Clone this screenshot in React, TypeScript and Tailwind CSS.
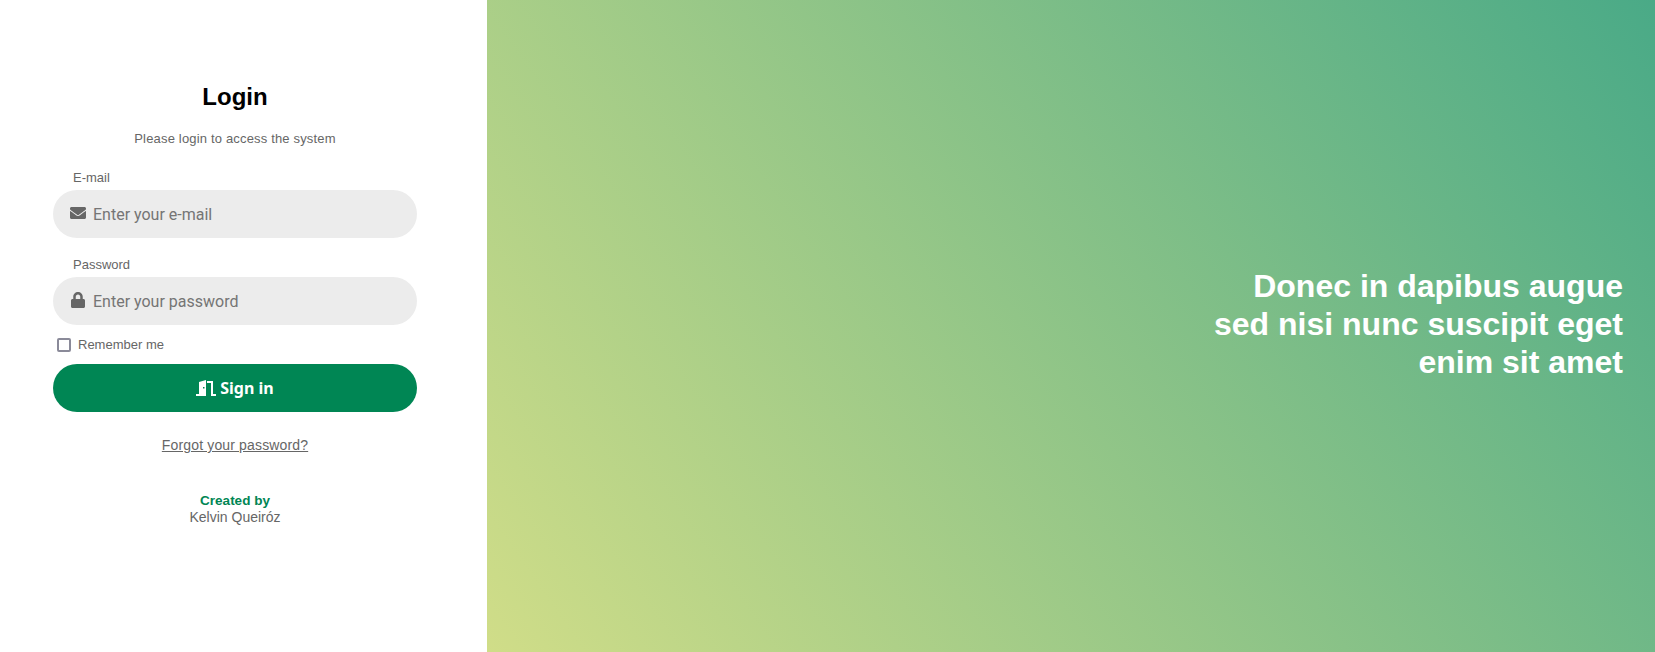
import type { ReactNode } from 'react';
import { FaEnvelope, FaLock } from 'react-icons/fa';

function Field(props: { label: string; placeholder: string; icon: ReactNode; type: string }) {
    return (
        <div>
            <label className="block pl-[20px] text-[13px] leading-[16px] text-[#666]">{props.label}</label>
            <div className="mt-[4px] flex h-[48px] items-center rounded-full bg-[#ececec] pl-[17px] pr-4">
                <span className="-mt-[3px] flex w-[23px] shrink-0 items-center text-[#666]">{props.icon}</span>
                <input
                    type={props.type}
                    placeholder={props.placeholder}
                    className="w-full bg-transparent pt-[2px] font-['Roboto',sans-serif] text-[16px] text-[#666] outline-none placeholder:text-[#757575]"
                />
            </div>
        </div>
    );
}

export default function App() {
    return (
        <div className="flex h-[652px] w-full bg-white font-['Liberation_Sans',Arial,sans-serif]">
            {/* form column */}
            <div className="flex w-[487px] shrink-0 flex-col pl-[53px] pr-[70px] pt-[82px]">
                <h1 className="text-center text-[24px] leading-[30px] font-bold text-black">Login</h1>
                <p className="mt-[19px] text-center text-[13px] leading-[16px] tracking-[0.17px] text-[#666]">
                    Please login to access the system
                </p>
                <div className="mt-[23px] flex flex-col gap-[19px]">
                    <Field label="E-mail" placeholder="Enter your e-mail" type="email" icon={<FaEnvelope size={16} />} />
                    <Field label="Password" placeholder="Enter your password" type="password" icon={<FaLock size={16} />} />
                </div>
                <label className="mt-[12px] flex items-center pl-[4px] text-[13px] leading-[16px] text-[#666]">
                    <span className="mr-[7px] h-[14px] w-[14px] rounded-[2px] border-2 border-[#8a8a99]" />
                    Remember me
                </label>
                <button className="mt-[11px] flex h-[48px] items-center justify-center gap-[4px] rounded-full bg-[#008654] font-['Noto_Sans',sans-serif] text-[16px] font-bold text-white">
                    <svg width="20" height="16" viewBox="0 0 20 16" fill="white">
                        <path d="M0 14h3V2l7-2v16H0z" />
                        <path d="M11 1h6v13h3v2h-5V3h-4z" />
                        <rect x="7" y="7" width="1.5" height="1.5" fill="#008654" />
                    </svg>
                    Sign in
                </button>
                <a href="#" className="mt-[24px] text-center text-[14px] leading-[18px] tracking-[0.15px] text-[#666] underline">
                    Forgot your password?
                </a>
                <div className="mt-[39px] text-center leading-[16px]">
                    <div className="text-[13.5px] font-bold text-[#008654]">Created by</div>
                    <div className="text-[14px] text-[#666]">Kelvin Queiróz</div>
                </div>
            </div>
            {/* gradient column */}
            <div className="flex flex-1 items-center justify-end bg-[linear-gradient(55deg,#d0dd88,#4aaa87)] pr-[32px] pb-[4px]">
                <h2 className="text-right text-[32px] leading-[38px] font-bold text-white">
                    Donec in dapibus augue
                    <br />
                    sed nisi nunc suscipit eget
                    <br />
                    enim sit amet
                </h2>
            </div>
        </div>
    );
}
